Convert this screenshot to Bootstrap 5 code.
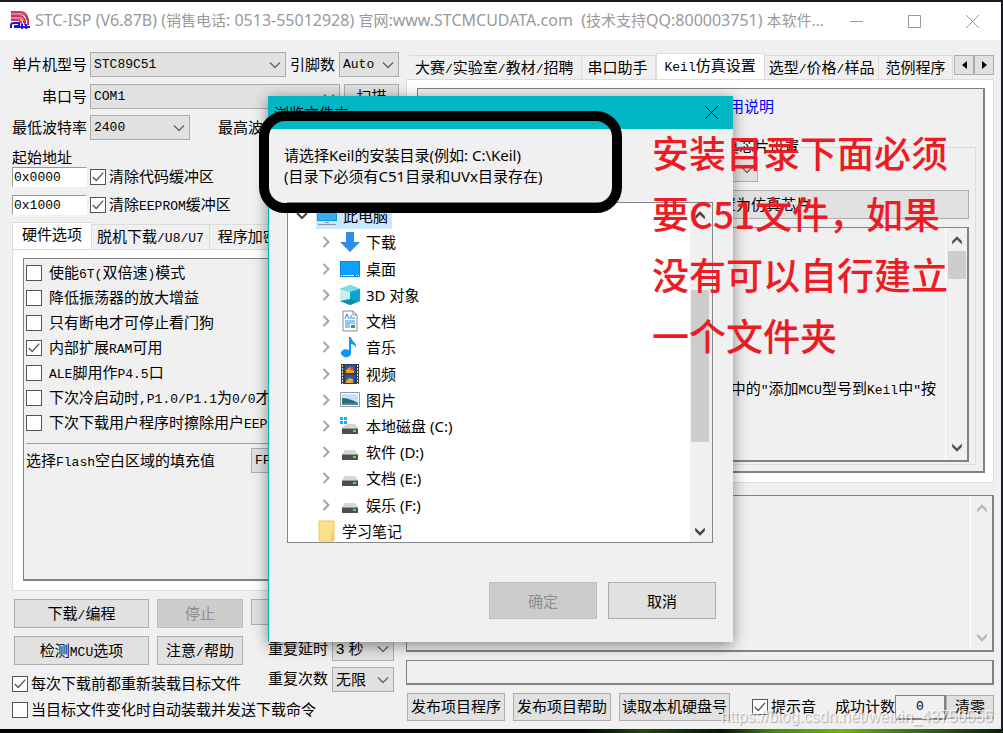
<!DOCTYPE html>
<html lang="zh-CN">
<head>
<meta charset="utf-8">
<meta name="viewport" content="width=device-width, initial-scale=1">
<title>STC-ISP (V6.87B)</title>
<link rel="stylesheet" href="https://cdn.jsdelivr.net/npm/bootstrap@5.3.0/dist/css/bootstrap.min.css">
<style>
:root{--face:#f0f0f0;--btn:#e1e1e1;--edge:#adadad;--teal:#00b7c3}
body{background:#17161c;font-family:"Liberation Sans","Noto Sans CJK SC",sans-serif;font-size:15px;line-height:20px;color:#000;min-height:100vh;overflow:hidden}
.desktop{min-height:100vh;padding:2px 2px 4px 0;background:linear-gradient(90deg,#000 0 58%,#1d4a08 64%,#071202 72%,#3f8a0c 77%,#6db31a 84%,#2e6a0a 92%,#0c1c05) bottom/100% 4px no-repeat,#1b1a22}
.app-win{background:var(--face)}
.cap-bar{height:38px;background:#fff;color:#999;padding-left:9px}
.cap-text{font-family:"Noto Sans","Noto Sans CJK SC",sans-serif;line-height:36px}
.cap-text span{font-size:16px}
.ctl{border:0;background:none;padding:0;width:58px;height:31px;display:flex;align-items:center;justify-content:center;color:inherit}
.simp{font-family:"Liberation Mono","Noto Sans CJK SC",monospace;font-size:13px}
span.simp{line-height:1}
.main-area{padding:0 7px 0 12px;gap:7px}
.left-col{width:387px;flex:none;padding:12px 0 10px}
.right-col{min-width:0;padding:13px 0 8px}
.cap{width:75px;text-align:right;margin-right:3px;flex:none}
.form-select{--bs-form-select-bg-img:url("data:image/svg+xml,%3csvg xmlns='http://www.w3.org/2000/svg' viewBox='0 0 12 12'%3e%3cpath fill='none' stroke='%23666' stroke-width='1.4' d='M1 3.500l5 5 5-5'/%3e%3c/svg%3e");height:25px;border:1px solid var(--edge);border-radius:0;background-color:var(--btn);background-size:12px 12px;background-position:right 4px center;padding:0 18px 0 3px;font-size:15px;line-height:20px;color:#000;min-width:0}
.form-select.simp{font-size:13px}
.btn{--bs-btn-border-radius:0;--bs-btn-bg:var(--btn);--bs-btn-color:#000;--bs-btn-border-color:var(--edge);--bs-btn-font-size:15px;--bs-btn-padding-x:2px;--bs-btn-padding-y:0;--bs-btn-line-height:20px;--bs-btn-disabled-bg:#ccc;--bs-btn-disabled-color:#8d8d8d;--bs-btn-disabled-border-color:#bfbfbf;--bs-btn-disabled-opacity:1;white-space:nowrap;overflow:hidden}
.form-control{border-radius:0;color:#000}
.addr{width:75px;height:20px;padding:0 0 0 1px;border:1px solid #fff;border-top-color:#999;border-left-color:#999;flex:none}
.form-check{min-height:0;height:20px;padding:0;margin:0;display:flex;align-items:center;white-space:nowrap}
.form-check .form-check-input{float:none;margin:0 3px 0 0;width:16px;height:16px;border:1px solid #555;border-radius:0;background-color:#fff;flex:none}
.form-check-input:checked{background-image:url("data:image/svg+xml,%3csvg xmlns='http://www.w3.org/2000/svg' viewBox='0 0 16 16'%3e%3cpath fill='none' stroke='%23555' stroke-width='1.5' d='M2 8l4 4 8-9'/%3e%3c/svg%3e")}
.opts .form-check-input{margin-right:7px}
.opts .form-check{height:25px}
.nav-tabs{border:0;flex-wrap:nowrap;overflow:hidden;align-items:flex-end;height:27px}
.nav-tabs .nav-link{border:1px solid #dcdcdc;border-bottom:0;border-left-width:0;border-radius:0;margin:0;background:var(--face);color:#000;padding:0 5px;height:25px;line-height:24px;white-space:nowrap}
.nav-tabs .nav-link.active{height:27px;border:1px solid #dcdcdc;border-bottom:0;background:#fff;color:#000;padding-bottom:2px}
.right-col .nav-tabs{height:26px}
.right-col .nav-tabs .nav-link{height:24px;padding:0 7px 0 6px}
.right-col .nav-tabs .nav-link.active{height:26px;padding:0 8px 2px}
.pane{background:#fff;border:1px solid #dcdcdc;padding:8px 8px 9px 10px}
.sunk{border:2px solid #828282;border-width:1px 2px 2px 1px;background:var(--face)}
.spin{width:20px;height:20px;display:flex;align-items:center;justify-content:center}
.spin svg,.bar svg{display:block}
.link-help{color:#00f;text-decoration:none}
.chipset{border:1px solid #dcdcdc;padding:0 6px 2px 2px;margin:0 7px 6px;min-width:0}
.chipset legend{float:none;width:auto;font-size:15px;line-height:20px;margin:0 0 0 52%;padding:0}
.bar{width:22px;flex:none;border-left:1px solid #fff;display:flex;flex-direction:column;align-items:center}
.thumb{background:#cdcdcd;width:18px}
.log-box{height:157px;flex:none}
.log-box textarea{resize:none;border:0;background:none;outline:0;min-width:0}
.prog{height:25px;border-radius:0;background:var(--face);flex:none}
/* folder picker, floats above the main window */
.picker{position:absolute;left:268px;top:96px;width:465px;height:546px;background:var(--face);border-left:1px solid var(--teal);box-shadow:0 3px 14px rgba(0,0,0,.45);font-family:"Noto Sans","Noto Sans CJK SC",sans-serif;padding-bottom:23px}
.picker-head{height:33px;background:var(--teal);padding-left:5px;flex:none}
.picker-msg{padding:16px 15px 15px;line-height:21px}
.tree{margin:0 20px 0 18px;height:341px;border:1px solid #828790;background:#fff;overflow:hidden}
.tree ul{height:341px;display:flex;flex-direction:column}
.tree li{flex:1;display:flex;align-items:center;padding-left:32px;white-space:nowrap}
.tree li>svg:first-child{margin-right:7px}
.tree li.top{padding-left:7px}
.tree li.folder{padding-left:29px}
.ico{width:22px;height:22px;margin-right:5px;flex:none}
.sel{background:#cce8ff;display:flex;align-items:center;height:26px;padding-right:4px}
.picker .btn{width:108px;height:37px}
.tree .bar{width:22px;background:var(--face);border:0;padding-right:3px}
.marker{position:absolute;left:259px;top:111px;width:363px;height:102px;border:10px solid #000;border-radius:26px}
.note{position:absolute;left:652px;top:122px;font:500 37px/61px "Noto Sans CJK SC",sans-serif;color:#ed1c24;white-space:nowrap;margin:0}
.wm{position:absolute;right:10px;bottom:6px;font-size:16px;color:rgba(255,255,255,.75);text-shadow:1px 1px 1px rgba(0,0,0,.3)}
</style>
<script src="https://cdn.jsdelivr.net/npm/bootstrap@5.3.0/dist/js/bootstrap.bundle.min.js"></script>
</head>
<body>
<svg width="0" height="0" class="position-absolute" aria-hidden="true">
<symbol id="arr" viewBox="0 0 8 12"><path d="M1.500 1l5 5-5 5" fill="none" stroke="#a6a6a6" stroke-width="2"/></symbol>
<symbol id="up" viewBox="0 0 10 10"><path d="M1 8V5l4-4 4 4v3L5 4z" fill="currentColor"/></symbol>
<symbol id="dn" viewBox="0 0 10 10"><path d="M1 2v3l4 4 4-4V2L5 6z" fill="currentColor"/></symbol>
<symbol id="disk" viewBox="0 0 22 22"><path d="M6 9h10l3 4H3z" fill="#d3d5d7"/><path d="M3 13h16v6H3z" fill="#4b4e50"/><path d="M3 13h16v1H3z" fill="#999"/><path d="M14 15h3v2h-3z" fill="#3fe05a"/></symbol>
</svg>
<div class="desktop d-flex flex-column">
<div class="app-win d-flex flex-column flex-grow-1">
<header class="cap-bar d-flex">
<svg width="22" height="20" viewBox="0 0 22 20" class="mt-2 me-1" fill="none"><path d="M2 2h9q7 0 8 8v5M2 6h8q5 0 6 5v4M2 10h7q3 0 4 5" stroke="#d8315b" stroke-width="2"/><path d="M2 4h9q6 0 7 6M2 8h8q4 0 5 5" stroke="#84234b"/><path d="M2 18v-3q0-2 3-2h5v5M6 18v-2h2v2M11 17h10M13 14v5M17 14v5" stroke="#1717e8" stroke-width="2"/></svg>
<div class="cap-text flex-grow-1 text-nowrap"><span>STC-ISP (V6.87B) (</span>销售电话<span>: 0513-55012928) </span>官网<span>:www.STCMCUDATA.com&nbsp; (</span>技术支持<span>QQ:800003751) </span>本软件...</div>
<div class="d-flex">
<button class="ctl mt-1" aria-label="最小化"><svg width="13" height="13" stroke="currentColor"><path d="M0 6.500h13"/></svg></button>
<button class="ctl mt-1" aria-label="最大化"><svg width="13" height="13" fill="none" stroke="currentColor"><path d="M.5.500h12v12H.5z"/></svg></button>
<button class="ctl mt-1" aria-label="关闭"><svg width="13" height="13" stroke="currentColor"><path d="M0 0l13 13M13 0L0 13"/></svg></button>
</div>
</header>
<main class="main-area d-flex flex-grow-1">
<section class="left-col d-flex flex-column">
<div class="d-flex align-items-center">
<label class="cap" for="mcu">单片机型号</label>
<select id="mcu" class="form-select simp flex-grow-1"><option>STC89C51</option></select>
<label class="flex-shrink-0 ms-1 me-1" for="pins">引脚数</label>
<select id="pins" class="form-select simp flex-shrink-0" style="width:60px"><option>Auto</option></select>
</div>
<div class="d-flex align-items-center" style="margin-top:7px">
<label class="cap" for="port">串口号</label>
<select id="port" class="form-select simp me-1"><option>COM1</option></select>
<button class="btn flex-shrink-0" style="width:55px;height:25px">扫描</button>
</div>
<div class="d-flex align-items-center" style="margin-top:6px">
<label class="cap" for="minb">最低波特率</label>
<select id="minb" class="form-select simp flex-shrink-0" style="width:100px"><option>2400</option></select>
<label class="flex-shrink-0" style="margin-left:28px" for="maxb">最高波特率</label>
<select id="maxb" class="form-select simp ms-1"><option>115200</option></select>
</div>
<div style="margin-top:8px;line-height:19px">起始地址</div>
<div class="d-flex align-items-center">
<input class="form-control simp addr" style="margin-right:3px" value="0x0000" aria-label="代码起始地址">
<div class="form-check"><input class="form-check-input" type="checkbox" id="c1" checked><label for="c1">清除代码缓冲区</label></div>
</div>
<div class="d-flex align-items-center mt-2">
<input class="form-control simp addr" style="margin-right:3px" value="0x1000" aria-label="EEPROM起始地址">
<div class="form-check"><input class="form-check-input" type="checkbox" id="c2" checked><label for="c2">清除<span class="simp">EEPROM</span>缓冲区</label></div>
</div>
<nav class="nav nav-tabs flex-shrink-0" style="margin-top:7px">
<button class="nav-link active" style="padding:0 9px 2px">硬件选项</button><button class="nav-link">脱机下载<span class="simp">/U8/U7</span></button><button class="nav-link px-2">程序加密传输</button>
</nav>
<div class="pane flex-grow-1 d-flex">
<div class="sunk flex-grow-1 opts overflow-hidden" style="padding:1px 0 0 2px">
<div class="form-check"><input class="form-check-input" type="checkbox" id="o1"><label for="o1">使能<span class="simp">6T(</span>双倍速<span class="simp">)</span>模式</label></div>
<div class="form-check"><input class="form-check-input" type="checkbox" id="o2"><label for="o2">降低振荡器的放大增益</label></div>
<div class="form-check"><input class="form-check-input" type="checkbox" id="o3"><label for="o3">只有断电才可停止看门狗</label></div>
<div class="form-check"><input class="form-check-input" type="checkbox" id="o4" checked><label for="o4">内部扩展<span class="simp">RAM</span>可用</label></div>
<div class="form-check"><input class="form-check-input" type="checkbox" id="o5"><label for="o5"><span class="simp">ALE</span>脚用作<span class="simp">P4.5</span>口</label></div>
<div class="form-check"><input class="form-check-input" type="checkbox" id="o6"><label for="o6">下次冷启动时<span class="simp">,P1.0/P1.1</span>为<span class="simp">0/0</span>才可下载</label></div>
<div class="form-check"><input class="form-check-input" type="checkbox" id="o7"><label for="o7">下次下载用户程序时擦除用户<span class="simp">EEPROM</span>区</label></div>
<hr class="m-0 mt-2 opacity-100" style="border-color:#a0a0a0">
<div class="d-flex align-items-center mt-1"><label class="flex-shrink-0" style="width:225px" for="fill">选择<span class="simp">Flash</span>空白区域的填充值</label><select id="fill" class="form-select simp"><option>FF</option></select></div>
</div>
</div>
<div class="d-flex gap-2 mt-2" style="padding-left:2px">
<button class="btn" style="width:135px;height:29px">下载<span class="simp">/</span>编程</button>
<button class="btn" disabled style="width:86px;height:29px">停止</button>
<button class="btn flex-grow-1" style="height:26px">重复编程</button>
</div>
<div class="d-flex gap-2 mt-2" style="padding-left:2px">
<button class="btn" style="width:135px;height:29px">检测<span class="simp">MCU</span>选项</button>
<button class="btn" style="width:86px;height:29px">注意<span class="simp">/</span>帮助</button>
<div class="d-flex align-items-center ms-auto" style="height:25px;margin-right:5px"><label class="me-1" for="dly">重复延时</label><select id="dly" class="form-select" style="width:62px"><option>3 秒</option></select></div>
</div>
<div class="d-flex justify-content-between" style="height:27px">
<div class="form-check align-self-end" style="height:16px"><input class="form-check-input" type="checkbox" id="r1" checked><label for="r1">每次下载前都重新装载目标文件</label></div>
<div class="d-flex align-items-end" style="margin-right:5px"><label class="me-1" for="cnt" style="line-height:26px">重复次数</label><select id="cnt" class="form-select" style="width:62px"><option>无限</option></select></div>
</div>
<div class="form-check mt-2" style="height:19px"><input class="form-check-input" type="checkbox" id="r2"><label for="r2">当目标文件变化时自动装载并发送下载命令</label></div>
</section>
<section class="right-col d-flex flex-column flex-grow-1">
<div class="d-flex flex-shrink-0" style="padding-left:3px">
<nav class="nav nav-tabs flex-grow-1">
<button class="nav-link">大赛<span class="simp">/</span>实验室<span class="simp">/</span>教材<span class="simp">/</span>招聘</button><button class="nav-link">串口助手</button><button class="nav-link active"><span class="simp">Keil</span>仿真设置</button><button class="nav-link" style="padding:0 4px">选型<span class="simp">/</span>价格<span class="simp">/</span>样品</button><button class="nav-link">范例程序</button>
</nav>
<button class="btn spin" aria-label="向左" style="margin-top:2px"><svg width="5" height="8"><path d="M5 0v8L0 4z"/></svg></button><button class="btn spin" aria-label="向右" style="margin-top:2px"><svg width="5" height="8"><path d="M0 0v8l5-4z"/></svg></button>
</div>
<div class="pane d-flex flex-grow-1">
<div class="sunk flex-grow-1 d-flex flex-column">
<div class="text-end" style="padding:8px 209px 20px 0"><a class="link-help" href="#">使用说明</a></div>
<fieldset class="chipset flex-grow-1 d-flex flex-column">
<legend>仿真芯片设置</legend>
<select class="form-select flex-shrink-0" aria-label="仿真芯片" style="width:61%"><option>STC15W4K32S4</option></select>
<button class="btn mt-2 flex-shrink-0" style="height:29px">将所选目标单片机设置为仿真芯片</button>
<div class="sunk mt-2 flex-grow-1 d-flex">
<div class="flex-grow-1 text-end" style="padding:151px 9px 0 0">面中的<span class="simp">"</span>添加<span class="simp">MCU</span>型号到<span class="simp">Keil</span>中<span class="simp">"</span>按</div>
<div class="bar" style="color:#555;padding:7px 0"><svg width="12" height="12"><use href="#up"/></svg><div class="thumb" style="height:28px;margin-top:4px"></div><svg width="12" height="12" class="mt-auto"><use href="#dn"/></svg></div>
</div>
</fieldset>
</div>
</div>
<div class="sunk log-box d-flex" style="margin-top:12px"><textarea class="flex-grow-1" readonly aria-label="输出信息"></textarea><div class="bar justify-content-between" style="color:#bbb;padding:7px 0"><svg width="12" height="12"><use href="#up"/></svg><svg width="12" height="12"><use href="#dn"/></svg></div></div>
<div class="progress prog sunk mt-2" role="progressbar" aria-label="进度"></div>
<div class="d-flex align-items-center mt-2" style="height:28px;padding-left:1px">
<button class="btn h-100 me-2" style="width:98px">发布项目程序</button>
<button class="btn h-100 me-2" style="width:98px">发布项目帮助</button>
<button class="btn h-100" style="width:111px">读取本机硬盘号</button>
<div class="form-check ms-auto"><input class="form-check-input" type="checkbox" id="beep" checked><label for="beep">提示音</label></div>
<label for="ok" style="margin-left:19px">成功计数</label>
<input id="ok" class="form-control simp text-center p-0 sunk" style="width:51px;height:25px" value="0">
<button class="btn" style="width:48px;height:24px">清零</button>
</div>
</section>
</main>
</div>
</div>
<section class="picker d-flex flex-column" role="dialog" aria-label="浏览文件夹">
<div class="picker-head d-flex align-items-center justify-content-between"><span>浏览文件夹</span><button class="ctl" style="width:44px;color:#000" aria-label="关闭"><svg width="13" height="13" stroke="currentColor"><path d="M0 0l13 13M13 0L0 13"/></svg></button></div>
<div class="picker-msg">请选择Keil的安装目录(例如: C:\Keil)<br>(目录下必须有C51目录和UVx目录存在)</div>
<div class="tree d-flex flex-shrink-0">
<ul class="list-unstyled m-0 flex-grow-1">
<li class="top"><svg width="14" height="12" viewBox="0 0 14 12"><path d="M2 3l5 5 5-5" fill="none" stroke="#444" stroke-width="2"/></svg><span class="sel"><svg class="ico" viewBox="0 0 22 22"><path d="M1 4h20v12H1z" fill="#1b8fe0"/><path d="M2 5h18v10H2z" fill="#35b0f5"/><path d="M9 17h4v1H9zM2 19h18v1H2z" fill="#8a949c"/></svg>此电脑</span></li>
<li><svg width="12" height="12"><use href="#arr"/></svg><svg class="ico" viewBox="0 0 22 22"><path d="M7 1h8v10h6L11 21 1 11h6z" fill="#2f8ee5"/></svg>下载</li>
<li><svg width="12" height="12"><use href="#arr"/></svg><svg class="ico" viewBox="0 0 22 22"><path d="M1 3h20v16H1z" fill="#0a84dc"/><path d="M2 4h18v13H2z" fill="#0ea0ff"/><path d="M2 17h1v1H2zM4 17h11v1H4zM17 17h1v1h-1zM19 17h1v1h-1z" fill="#fff"/></svg>桌面</li>
<li><svg width="12" height="12"><use href="#arr"/></svg><svg class="ico" viewBox="0 0 22 22"><path d="M1 5l10-4 10 4v12l-10 4-10-4z" fill="#17b4cf"/><path d="M1 5l10-4 10 4-10 3z" fill="#7fdbe6"/><path d="M1 5l10 3v9l-10 0z" fill="#c9f0f1"/><path d="M11 8l10-3v12l-10-2z" fill="#0aa3d8"/><path d="M11 15l10 2-10 4-10-4z" fill="#118fa3"/></svg>3D 对象</li>
<li><svg width="12" height="12"><use href="#arr"/></svg><svg class="ico" viewBox="0 0 22 22"><path d="M4 1h10l4 4v16H4z" fill="#fff" stroke="#8b8b8b"/><path d="M14 1v4h4" fill="none" stroke="#8b8b8b"/><path d="M6 9l2-5 2 5M11 6h2M11 8h5M6 11h10M6 13h10M6 15h5M6 17h5" fill="none" stroke="#2590d8"/><path d="M12 15h4v3h-4z" fill="#4a8f65"/></svg>文档</li>
<li><svg width="12" height="12"><use href="#arr"/></svg><svg class="ico" viewBox="0 0 22 22"><path d="M10 1h2c0 4 6 5 5 11-1-3-3-4-5-4v9a5 4 0 1 1-2-3z" fill="#0c97f5"/></svg>音乐</li>
<li><svg width="12" height="12"><use href="#arr"/></svg><svg class="ico" viewBox="0 0 22 22"><path d="M2 1h18v20H2z" fill="#3b3b3b"/><path d="M3.500 2v19M18.500 2v19" stroke="#ddd" stroke-dasharray="2 1"/><path d="M6 2h10v8H6zM6 12h10v8H6z" fill="#2856b8"/><path d="M7 7l4-3 4 4v2H7z" fill="#f0a020"/><path d="M7 18l3-3 4 1v4H7z" fill="#e2aa30"/><path d="M11 4h3v3h-3z" fill="#da4a2c"/></svg>视频</li>
<li><svg width="12" height="12"><use href="#arr"/></svg><svg class="ico" viewBox="0 0 22 22"><path d="M1.500 3.500h19v14h-19z" fill="#fff" stroke="#999"/><path d="M3 5h16v11H3z" fill="#bfe3fa"/><path d="M3 9q7 0 16 5v2H3z" fill="#2d6d6c"/><path d="M3 14h16v2H3z" fill="#3c86b8"/></svg>图片</li>
<li><svg width="12" height="12"><use href="#arr"/></svg><svg class="ico" viewBox="0 0 22 22"><use href="#disk"/><path d="M0 1h8v9H0z" fill="#fff"/><path d="M1 2h3v3H1zM5 2h3v3H5zM1 6h3v3H1zM5 6h3v3H5z" fill="#12b2f0"/></svg>本地磁盘 (C:)</li>
<li><svg width="12" height="12"><use href="#arr"/></svg><svg class="ico"><use href="#disk"/></svg>软件 (D:)</li>
<li><svg width="12" height="12"><use href="#arr"/></svg><svg class="ico"><use href="#disk"/></svg>文档 (E:)</li>
<li><svg width="12" height="12"><use href="#arr"/></svg><svg class="ico"><use href="#disk"/></svg>娱乐 (F:)</li>
<li class="folder"><svg class="ico" viewBox="0 0 22 22" style="margin-right:3px"><path d="M2 1h15v20H2z" fill="#ffe08a"/><path d="M2 1h15v20H2z" fill="none" stroke="#ecc65c"/><path d="M14 13h3v8h-3z" fill="#f4cb5d"/></svg>学习笔记</li>
</ul>
<div class="bar" style="color:#444;padding-top:7px;padding-bottom:5px"><svg width="12" height="12"><use href="#up"/></svg><div class="thumb" style="height:152px;margin-top:68px"></div><svg width="12" height="12" class="mt-auto"><use href="#dn"/></svg></div>
</div>
<div class="d-flex justify-content-end mt-auto" style="gap:11px;padding-right:17px"><button class="btn" disabled>确定</button><button class="btn">取消</button></div>
</section>
<div class="marker"></div>
<p class="note">安装目录下面必须<br>要C51文件，如果<br>没有可以自行建立<br>一个文件夹</p>
<div class="wm">https://blog.csdn.net/weixin_43750556</div>
</body>
</html>
